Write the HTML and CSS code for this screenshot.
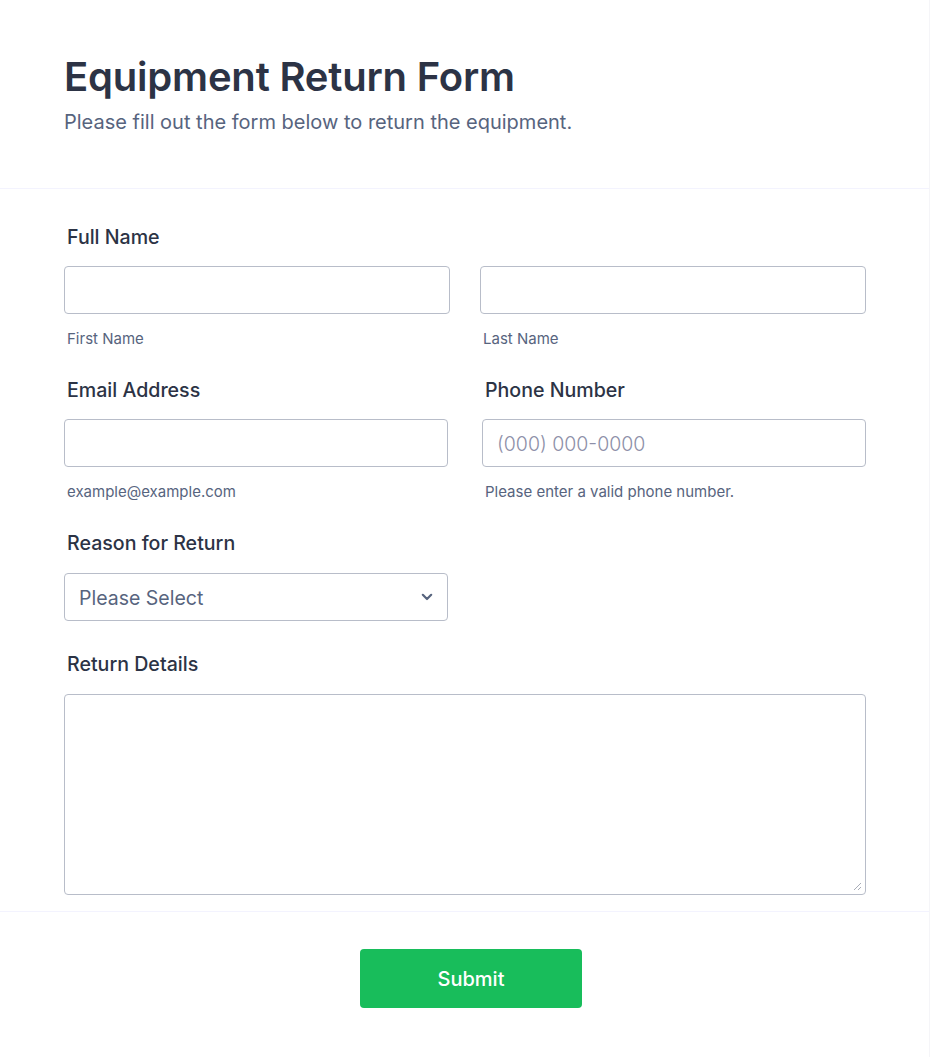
FILE: index.html
```html
<!DOCTYPE html>
<html>
<head>
<meta charset="utf-8">
<link rel="stylesheet" href="styles.css">
</head>
<body>
<div class="form">
  <header class="head">
    <h1 class="title">Equipment Return Form</h1>
    <p class="subtitle">Please fill out the form below to return the equipment.</p>
  </header>
  <div class="fields">
    <div class="field with-sub">
      <div class="label">Full Name</div>
      <div class="row row-name">
        <div class="col">
          <div class="input"></div>
          <div class="sub">First Name</div>
        </div>
        <div class="col">
          <div class="input"></div>
          <div class="sub">Last Name</div>
        </div>
      </div>
    </div>
    <div class="row row-contact">
      <div class="col field with-sub">
        <div class="label">Email Address</div>
        <div class="input"></div>
        <div class="sub">example@example.com</div>
      </div>
      <div class="col field with-sub">
        <div class="label">Phone Number</div>
        <div class="input"><span class="placeholder">(000) 000-0000</span></div>
        <div class="sub">Please enter a valid phone number.</div>
      </div>
    </div>
    <div class="field half">
      <div class="label">Reason for Return</div>
      <div class="input select">
        <span class="placeholder">Please Select</span>
        <svg class="chev" width="12" height="8" viewBox="0 0 12 8"><path d="M1.8 1.8 L6 6 L10.2 1.8" fill="none" stroke="#57647e" stroke-width="2.2" stroke-linecap="round" stroke-linejoin="round"/></svg>
      </div>
    </div>
    <div class="field last">
      <div class="label">Return Details</div>
      <div class="textarea">
        <svg class="grip" width="10" height="10" viewBox="0 0 10 10"><path d="M9 2 L2 9 M9 6 L6 9" stroke="#a9adb8" stroke-width="1"/></svg>
      </div>
    </div>
  </div>
  <div class="foot">
    <button class="submit">Submit</button>
  </div>
</div>
</body>
</html>
```

FILE: styles.css
```css
html, body {
  margin: 0;
  padding: 0;
  background: #ffffff;
}
body {
  font-family: Inter, "Noto Sans", sans-serif;
  color: #2c3345;
}
.form {
  width: 930px;
  min-height: 1057px;
  box-sizing: border-box;
  border-right: 1px solid #f5f5f8;
}
.head {
  padding: 53px 64px 0 64px;
  height: 135px;
  border-bottom: 1px solid #f3f3fe;
}
.title {
  margin: 0;
  font-size: 40px;
  line-height: 48px;
  font-weight: 600;
  color: #2c3345;
  letter-spacing: -0.2px;
}
.subtitle {
  margin: 9px 0 0 0;
  font-size: 20px;
  line-height: 24px;
  color: #57647e;
}
.fields {
  padding: 36px 63px 16px 64px;
  border-bottom: 1px solid #f3f3fe;
}
.field {
  display: flex;
  flex-direction: column;
  margin-bottom: 31px;
}
.with-sub {
  margin-bottom: 30px;
}
.row-contact {
  margin-bottom: 0;
}
.row {
  display: flex;
  justify-content: space-between;
}
.row-name .col {
  width: 386px;
}
.row-contact .col {
  width: 384px;
}
.label {
  font-size: 19.6px;
  line-height: 24px;
  font-weight: 500;
  padding-left: 3px;
  margin-bottom: 17px;
  color: #2c3345;
}
.input {
  height: 48px;
  box-sizing: border-box;
  border: 1px solid #b8bdc9;
  border-radius: 4px;
  display: flex;
  align-items: center;
  padding: 1px 14px 0 14px;
  background: #fff;
}
.placeholder {
  font-size: 19.5px;
  font-weight: 300;
  color: #8d8fa8;
}
.select .placeholder {
  font-weight: 400;
  color: #57647e;
}
.sub {
  font-size: 15px;
  line-height: 18px;
  color: #57647e;
  padding-left: 3px;
  margin-top: 16px;
}
.half {
  width: 384px;
}
.half .label {
  margin-bottom: 18px;
}
.select {
  justify-content: space-between;
  padding-top: 2px;
  padding-right: 14px;
}
.chev {
  margin-top: -2px;
}
.last .label {
  margin-bottom: 18px;
}
.last {
  margin-bottom: 0;
}
.textarea {
  height: 201px;
  box-sizing: border-box;
  border: 1px solid #b8bdc9;
  border-radius: 4px;
  position: relative;
}
.grip {
  position: absolute;
  right: 3px;
  bottom: 3px;
}
.foot {
  padding-top: 37px;
  padding-left: 360px;
}
.submit {
  width: 222px;
  height: 59px;
  border: none;
  border-radius: 4px;
  background: #18bd5b;
  color: #ffffff;
  font-family: Inter, "Noto Sans", sans-serif;
  font-size: 20px;
  font-weight: 500;
  padding: 0;
}
```
